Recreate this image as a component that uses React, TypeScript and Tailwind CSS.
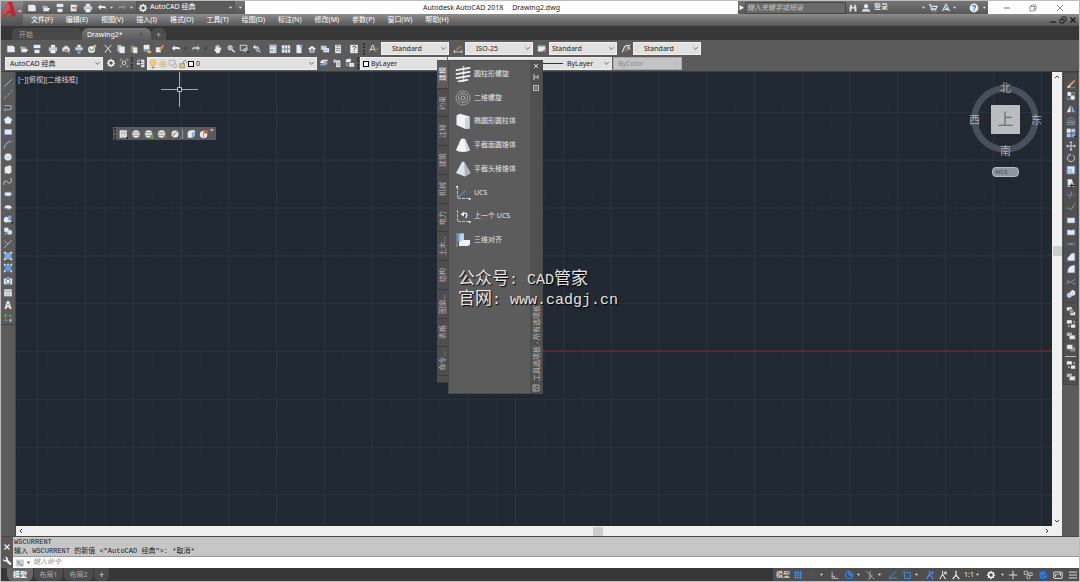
import type { ReactNode } from 'react'
import clsx from 'clsx'

const UI = "font-['Noto_Sans','Noto_Sans_CJK_SC',sans-serif]"
const MONO = "font-['Liberation_Mono','Noto_Sans_CJK_SC',monospace]"

const W = '#e6ebf0'
const B = '#7fa8d6'
const D = '#3a3a3a'

const ICONS: Record<string, ReactNode> = {
  // file
  new: <path d="M1.500 2h7l2 2v6h-9z" fill={W} />,
  open: <><path d="M1.5 3h3l1 1h3v2H4L2.5 9.5z" fill="#aab4bf" /><path d="M4 6h7L9 10H2.5z" fill={W} /></>,
  save: <><path d="M2 1h8v4H2z" fill={W} /><path d="M2 5h8v2H2z" fill="#56779b" /><path d="M3 7h6v4H3z" fill={W} /></>,
  saveas: <><path d="M2 2h7v8H2z" fill={W} /><path d="M3.500 5h4v1.500h-4z" fill="#56779b" /><path d="M5.500 7.500 10 2l1.200 1L7 8.500z" fill="#e0a040" /></>,
  print: <><path d="M3.500 1h5v3.500h-5z" fill={W} /><path d="M1 4h10v4.500H1z" fill="#c6d2df" /><path d="M3 7h6v4H3z" fill="#fff" stroke={B} strokeWidth=".6" /></>,
  preview: <><path d="M1.500 5 6 1.500 10.500 5v4H8.500V6.500h-5V9h-2z" fill="#d5dde5" /><circle cx="6.500" cy="7" r="2.200" fill="none" stroke={W} /><path d="m8 8.500 2.500 2.500" stroke={W} /></>,
  publish: <><path d="M4 1h4v3H4z" fill={W} /><path d="M1.500 4h9v3.500h-9z" fill="#c6d2df" /><path d="M6 6v5M4 9l2 2.500L8 9" stroke={B} strokeWidth="1.300" fill="none" /></>,
  dwf: <><circle cx="5.500" cy="6.500" r="4.200" fill={W} /><path d="M3 5.500c2 3 4 3 5.500 0" stroke="#4f9b4e" fill="none" strokeWidth="1.300" /><path d="M8 1h3v3H8z" fill="#e4b64c" /></>,
  cut: <><path d="m2 1 7 8M10 1 3 9" stroke={W} strokeWidth="1.100" /><path d="M2 9.500h2M8 9.500h2" stroke="#bfc8d0" strokeWidth="1.500" /></>,
  copy: <><path d="M1.500 1h5v8h-5z" fill="#a9b4c0" /><path d="M4 3h6.500v8H4z" fill={W} /></>,
  paste: <><path d="M2 2h5v8H2z" fill="#9b8a72" /><path d="M5 4h5v7H5z" fill={W} /></>,
  match: <><path d="M2 1h7v5H2z" fill={W} /><path d="M2 6h7v3H2z" fill={B} /><path d="M6.500 8H11v3H6.500z" fill="#e4b64c" /></>,
  block: <><path d="M1 4h6v6H1z" fill={W} /><path d="m5 7 4-6 2 1-4 6z" fill="#d8893d" /></>,
  undo: <path d="M1 5 4.500 1.500v2.200h3.700c2 0 2.800 1.300 2.800 4.300-1-1.800-1.600-2-3-2H4.500v2.500z" fill={W} />,
  redo: <path d="M11 5 7.500 1.500v2.200H3.800C1.800 3.700 1 5 1 8c1-1.800 1.600-2 3-2h3.500v2.500z" fill="#bcbcbc" />,
  pan: <path d="M3 6V2.500h1V5l.6-4h1L6 5l.8-3.700h1L7.600 5.500 9 3.800l1.200.7L8.500 9 7.500 11H4.200L1.500 7l.8-1z" fill={W} />,
  zoom: <><circle cx="5" cy="4.500" r="2.600" fill="#9db0c2" stroke={W} /><path d="m7 6.500 3.500 3.500" stroke={W} strokeWidth="1.600" /></>,
  zoomwin: <><path d="M1.500 1.500h8v6h-8z" fill="none" stroke={W} /><circle cx="7.500" cy="7" r="2" fill="#8796a6" stroke={W} strokeWidth=".8" /><path d="M9 9h2.500v2.500z" fill="#111" /></>,
  zoomprev: <><path d="M1 3.500 4 1v2h4v1.500H4v2z" fill={W} /><circle cx="7" cy="7" r="1.800" fill="none" stroke={W} /><path d="m8.500 8.500 2 2" stroke={W} /></>,
  props: <><path d="M2 1h8v10H2z" fill={W} /><path d="M2 1h8v3H2z" fill="#a9c4e2" /><path d="M3 6h3v3H3z" fill={B} /><path d="M7 6.500h2M7 9h2" stroke="#666" strokeWidth=".7" /></>,
  center: <><path d="M1 1.500h10v9H1z" fill={W} /><path d="M4.500 1.500v9M8 1.500v9M1 6h10" stroke="#56779b" /></>,
  palettes: <><path d="M3 1h6v10H3z" fill={W} /><path d="M7 1h3v3H7z" fill={B} /></>,
  sheet: <><path d="M1 6 6 2l5 4-5 2z" fill={W} /><path d="M3 7h6v3.500H3z" fill="#b5c3d1" /><path d="M5 5.500h2V9H5z" fill="#56779b" /></>,
  markup: <><path d="M1 2h7v5H1z" fill="#bccbd9" /><path d="M4 5h7v5H4z" fill={W} /><path d="M5 7.500h5" stroke={B} /></>,
  calc: <><path d="M2.500 1h7v10h-7z" fill={W} /><path d="M3.500 2.500h5M3.500 5.500h5M3.500 8h5" stroke="#777" /></>,
  helpbox: <><path d="M1.500 1h9v10h-9z" fill={W} /><path d="M4.500 4c0-2 3.500-2 3.500 0C8 5.500 6.200 5.300 6.200 7M6.200 8.300v1.200" stroke="#444" fill="none" strokeWidth="1.200" /></>,
  // styles
  textstyle: <><path d="M1 9 4 1.500h1L8 9M2.300 6.500h4.300" stroke={W} fill="none" strokeWidth="1.100" /><path d="m6 10 1-2.500L11 4l.8 1-4 4z" fill="#a8764b" /></>,
  dimstyle: <><path d="M1 9.500h10M1.500 7v4M10.500 7v4" stroke={W} strokeWidth=".9" /><path d="m3 8 1-2.500L9 2l1.300 1.500L6 7z" fill="#a8764b" /></>,
  tablestyle: <><path d="M1 2h9v7H1z" fill={W} /><path d="M1 2h9v1.500H1z" fill="#9aa" /><path d="m6 10 1-2L11 5l.8 1L8 9.500z" fill="#a8764b" /></>,
  mleader: <><path d="M1.500 10 4 4c1-2 3-2.500 7-2.500" stroke={W} fill="none" strokeWidth="1.300" /><path d="M7 3h4v4H7z" fill="#bbb" /><path d="m4 10 1-2.500L9 5l.8 1L6 9.500z" fill="#a8764b" /></>,
  gear: <><circle cx="6" cy="6" r="3" fill="none" stroke="#eee" strokeWidth="1.800" /><path d="M6 1v1.500M6 9.500V11M1 6h1.500M9.500 6H11M2.500 2.500l1 1M8.500 8.500l1 1M9.500 2.500l-1 1M3.500 8.500l-1 1" stroke="#eee" strokeWidth="1.500" /></>,
  wsave: <><path d="M1.500 4V1.500H4M8 1.500h2.500V4M10.500 8v2.500H8M4 10.500H1.500V8" stroke="#aaa" fill="none" /><circle cx="6" cy="6" r="2.200" fill="none" stroke="#bbb" strokeWidth="1.500" /></>,
  layers: <><path d="m1 3 4-2v3L1 6z" fill={B} /><path d="M1 6h4v2H1z" fill={W} /><path d="M6 2h4v9H6z" fill={W} /><path d="M6 5h3M6 8h3" stroke="#666" /></>,
  bulb: <><path d="M6 1a3.200 3.200 0 0 1 1.800 6v1.500H4.200V7A3.200 3.200 0 0 1 6 1z" fill="#f2d25c" stroke="#b59535" strokeWidth=".5" /><path d="M4.500 9.500h3v1.500h-3z" fill="#777" /></>,
  sun: <><circle cx="6" cy="6" r="2.300" fill="#f7e07a" stroke="#a9913c" strokeWidth=".7" /><path d="M6 .8v2M6 9.200v2M.8 6h2M9.200 6h2M2.300 2.300l1.300 1.300M8.400 8.400l1.300 1.300M9.700 2.300 8.400 3.600M3.600 8.400 2.300 9.700" stroke="#a9913c" strokeWidth=".7" /></>,
  vpfreeze: <><path d="M1.500 1.500h7v6h-7z" fill="none" stroke="#aaa" /><circle cx="8" cy="8" r="2.400" fill="#ddd" stroke="#aaa" /></>,
  lock: <><path d="M2 5.500h6v5H2z" fill="#dcc677" stroke="#77704e" strokeWidth=".6" /><path d="M6.500 5.500V3a1.800 1.800 0 0 1 3.500 0v1.500" stroke="#777" fill="none" /></>,
  layercur: <><path d="m1 8 3-2h7L8 9H2z" fill={B} /><path d="m1 5 3-3h7L8 6H2z" fill={W} /><path d="M5 4.500h3.500" stroke="#56779b" /></>,
  layerprev: <><path d="M5 3h5v8H5z" fill={W} /><path d="M1 4 4 1v2h4v1.500H4v2z" fill="#cfd8e0" /><path d="M6 6h3M6 8.500h3" stroke="#56779b" /></>,
  layerstate: <><path d="m1 2 3-1h3v4H1z" fill={W} /><path d="M5 6h6v4.500H5z" fill={W} /><path d="M2 6v3h2M7 8h3" stroke="#bcd" fill="none" /></>,
  // draw
  line: <path d="m1.500 10.500 9-9" stroke="#a9b5c0" strokeWidth="1.200" />,
  xline: <path d="m2 10 8-8M1 11h1.500M9.500 1H11" stroke="#93a7bb" strokeDasharray="4 1" />,
  pline: <><path d="M2 3h5.500a2.500 2.500 0 0 1 0 5H2" stroke="#8fb0d2" fill="none" strokeWidth="1.300" /><path d="M1 6.500h3v3H1z" fill="#7d90a3" /></>,
  polygon: <path d="M6 1.500 10.800 5 9 10.500H3L1.200 5z" fill={W} stroke="#8fa3b8" strokeWidth=".6" />,
  rect: <path d="M2 3h8.500v6H2z" fill={W} stroke={B} strokeWidth=".8" />,
  arc: <path d="M1.500 10.500C2 5 5.500 2 10.500 1.500" stroke={B} fill="none" strokeWidth="1.300" />,
  circle: <><circle cx="6" cy="6" r="4.300" fill={W} stroke="#92adca" strokeWidth=".8" /><circle cx="6" cy="6" r="1" fill={B} /></>,
  cloud: <path d="M3 2a2 2 0 0 1 3 0 2 2 0 0 1 4 1v4a2 2 0 0 1-2 3 2 2 0 0 1-3 0 2 2 0 0 1-3-2V4a2 2 0 0 1 1-2z" fill="#e9e9e9" />,
  spline: <path d="M1 9.500C1 5 3 3.500 5 5.500s3.500 3 5-.5c.8-1.800 0-3-1.500-3.500" stroke="#cfd7df" fill="none" strokeWidth="1.100" />,
  ellipse: <><ellipse cx="6" cy="6" rx="4.500" ry="2.400" fill={W} stroke={B} strokeWidth=".7" /><path d="M1 6h2M9 6h2M6 3v1.500" stroke="#467bb5" /></>,
  earc: <><path d="M1.500 7C2 3 10 3 10.500 7 9 9 7 8 6 8z" fill={W} /><path d="M1 7h2M5.500 8.500h2" stroke={B} strokeWidth="1.400" /></>,
  insert: <><path d="m1 5 3-2 3 2v4L4 10.500 1 9z" fill={W} /><path d="M6 2h4v4H6z" fill={B} /><path d="M6 7h4v3H6z" fill="#c9d5e2" /><path d="M9.500 9.500H12V12z" fill="#111" /></>,
  mkblock: <><path d="M1.500 2h5v5h-5z" fill={W} /><circle cx="8" cy="7.500" r="3" fill="#d5dbe0" /><path d="M2 8h3v2H2z" fill={B} /></>,
  point: <path d="m1.500 2 4 4M10.500 1.500l-9 9" stroke="#a9bdd1" strokeWidth="1.100" />,
  hatch: <><path d="M2 2h8v8H2z" fill="#8db8ea" /><path d="M1 1h2v2H1zM9 1h2v2H9zM1 9h2v2H1zM9 9h2v2H9z" fill={W} /><path d="M2 4.500h8M2 7.500h8" stroke="#5c8fcb" /></>,
  gradient: <><path d="M2 2h8v8H2z" fill="#5e96da" /><path d="M1 1h2v2H1zM9 1h2v2H9zM1 9h2v2H1zM9 9h2v2H9zM5 1h2v1.500H5z" fill={W} /></>,
  region: <><path d="M1 3h10v7H1z" fill={W} /><circle cx="6" cy="6.500" r="2.600" fill="#fff" stroke="#5c8fcb" strokeWidth="1.300" /><path d="M4 1.500h4V3H4z" fill={B} /></>,
  table: <><path d="M1.500 1.500h9V10h-9z" fill={W} /><path d="M1.500 3.500h9M4.500 4v6M7.500 4v6" stroke="#777" strokeWidth=".7" /></>,
  addsel: <><circle cx="3" cy="3" r="2" fill="#53a043" /><path d="M7 3h2v2M3 7v2h2" stroke="#aaa" fill="none" strokeWidth=".8" /><circle cx="9" cy="9" r="1.700" fill="#8fb5e5" /></>,
  // modify
  erase: <><path d="M3 7.500 10 1l1 1.500-6 6.500z" fill="#e0a04c" /><path d="m1 9.500 2.500-2L5.500 9 3 11z" fill="#f0e0d5" /><path d="M5 10.500h6" stroke="#999" /></>,
  mcopy: <><circle cx="4" cy="3.500" r="2.600" fill={W} /><circle cx="8" cy="8" r="2.800" fill={W} stroke={B} strokeWidth=".6" /><path d="M7 2h3v3M2 7v3h3" stroke="#aaa" fill="none" /></>,
  mirror: <><path d="M5.300 1.500V10H1z" fill={W} /><path d="M6.700 1.500V10H11z" fill={B} /></>,
  offset: <><path d="M2 8V6a3.800 3.800 0 0 1 8 0v2z" fill="none" stroke="#7d94ad" /><path d="M1 8h10M1 10.500h10M4.500 8V6.500a1.500 1.500 0 0 1 3 0V8" stroke="#8ba2ba" fill="none" /></>,
  array: <><path d="M1 1h4.500v4.500H1zM6.500 1h4.500v4.500H6.500zM1 6.500h4.500v4.500H1z" fill="#a8caef" /><path d="M1 1h4.500v4.500H1z" fill={W} /><path d="M6.500 6.500h4.500v4.500H6.500z" fill={B} /><path d="M9.500 9.500H12V12z" fill="#111" /></>,
  move: <path d="M6 0 8 2.500H6.600v2.900h2.900V4L12 6 9.500 8V6.600H6.600v2.900H8L6 12 4 9.500h1.400V6.600H2.500V8L0 6l2.500-2v1.400h2.900V2.500H4z" fill="#c3d5e8" />,
  rotate: <><path d="M4 2.500a4.200 4.200 0 1 0 4 0" stroke="#c8d0d8" fill="none" strokeWidth="1.200" /><path d="m3 .5 4 1.300-3 2.500z" fill={B} /></>,
  scale: <><path d="M1.500 1.500h9v9h-9z" fill={W} stroke={B} /><path d="M1.500 5H7v5.500H1.500z" fill="#b5d0ee" stroke="#6b96c7" strokeWidth=".6" /></>,
  stretch: <><path d="M2 1.500h5L10 10.500H2z" fill={W} /><path d="M2 8h4v2.500H2z" fill={B} /><path d="M7 6.500v5M5 9h5" stroke="#111" strokeWidth="1.200" /></>,
  trim: <><path d="M1 6h3M5.500 6H7M8.500 6H10" stroke="#6f95bc" strokeWidth="1.200" /><path d="m4 10 3-8" stroke="#8a9bab" /></>,
  extend: <><path d="M1 7.500h5" stroke="#6f95bc" strokeWidth="1.200" /><path d="m6 10 4.500-8" stroke="#8f9fae" /></>,
  brk: <path d="M1.500 3.500h9v6h-9z" fill={W} stroke={B} strokeWidth=".7" />,
  brk2: <><path d="M1.500 3.500h9v6h-9z" fill={W} stroke={B} strokeWidth=".7" /><path d="M5 2h2v2H5z" fill="#555" /></>,
  join: <path d="M1 6h4M7 6h4M4 4.500 6 6 4 7.500M8 4.500 6 6l2 1.500" stroke="#7598bd" fill="none" />,
  chamfer: <path d="M2 10.500V7l5-5.500h3.500v9z" fill={W} stroke={B} strokeWidth=".6" />,
  fillet: <path d="M2 10.500C2 4 5 1.500 10.500 1.500v9z" fill={W} stroke={B} strokeWidth=".6" />,
  blend: <path d="M1 9C3 3 5 8 6.500 6S9 3 11 3M1 5h3M8 8h3" stroke="#6c8fb5" fill="none" strokeWidth="1.400" />,
  explode: <><path d="m1 6 3-2 3 2v3l-3 2-3-2z" fill="#b6cfe9" /><path d="m5 3 3-2 3 2v4L8 8.500 5 7z" fill={W} /><path d="m5 3 3 1.500V8.500" stroke={B} fill="none" strokeWidth=".6" /></>,
  order1: <><path d="M1 1.500h6v4H1z" fill={W} /><path d="M5 7h6v4H5z" fill={W} /><path d="M4 4h5v4.500H4z" fill="#9a9a9a" stroke="#555" strokeWidth=".5" /></>,
  order2: <><path d="M1 1.500h6v4H1zM6 6.500h5v4H6z" fill={W} /><path d="M3 7v2h2M8.500 3h1.500v2.500" stroke="#ccc" fill="none" /></>,
  order3: <><path d="M1 2h6v4H1z" fill="#bbb" /><path d="M4 5h7v5H4z" fill={W} stroke="#666" strokeWidth=".6" /></>,
  order4: <><path d="M5 5h6v5H5z" fill="#999" /><path d="M1 2h7v5.500H1z" fill={W} stroke="#666" strokeWidth=".6" /></>,
  // solids toolbar
  hide: <><path d="M2 1.500h8.500v9H2z" fill={W} /><path d="M5 1.500v9M8 1.500v9M2 5h8.500" stroke="#888" strokeWidth=".6" /><path d="M9.500 9.500H12V12z" fill="#111" /></>,
  globe: <><circle cx="6" cy="6" r="4.500" fill={W} /><path d="M1.500 4.500h9M1.500 7.500h9" stroke="#777" strokeWidth=".9" /></>,
  globeadd: <><circle cx="5.500" cy="6" r="4.500" fill={W} /><path d="M1 4.500h9M1 7.500h9" stroke="#777" strokeWidth=".9" /><circle cx="9.500" cy="9.500" r="2.400" fill="#5ea03b" /></>,
  globedel: <><circle cx="5.500" cy="6" r="4.500" fill={W} /><path d="M1 4.500h9M1 7.500h9" stroke="#777" strokeWidth=".9" /><path d="M8 9.500h3.500" stroke="#d04a48" strokeWidth="2.200" /></>,
  globeno: <><circle cx="6" cy="6" r="4.300" fill={W} /><path d="m2 10 8-8M3 7l3-3" stroke="#777" /></>,
  cube: <><path d="m2 3.500 3-2h5.500v7l-3 2H2z" fill={W} /><path d="M7 4h3.500v4L7 10.500z" fill="#86b4e8" /></>,
  clip: <><circle cx="5.500" cy="6.500" r="4.500" fill={W} /><path d="M5.500 2.500v8" stroke="#888" /><path d="M6.500 1H11v4.500H6.500z" fill="#dc4b39" /></>,
  // info center
  find: <path d="M1.500 10.500V5L3 1.500h2v3h2v-3h2L10.500 5v5.500H7.500V7h-3v3.500z" fill="#e0e0e0" stroke="#444" strokeWidth=".4" />,
  user: <><circle cx="6" cy="3.800" r="2.500" fill="#e3eaf0" /><path d="M1 10.500c0-3 2-3.500 5-3.500s5 .5 5 3.500z" fill="#c6d8e6" /></>,
  cart: <path d="M1 2h2l1 6h6M4 4h7l-1.500 3H4.500M5 10h.8M9 10h.8" stroke="#d5dfeb" fill="none" strokeWidth="1.400" />,
  a360: <path d="M1.500 10 6 1.500 10.500 10M3 8l6-1.500M4.500 5l4 4" stroke="#c9ddf4" fill="none" strokeWidth="1.300" />,
  help: <><circle cx="6" cy="6" r="5.300" fill="#e9f0f7" /><path d="M4.300 4.600c.2-2.200 3.600-2 3.500 0C7.700 6 6.100 5.800 6.100 7.400M6.100 8.400v1.300" stroke="#2c68ac" fill="none" strokeWidth="1.300" /></>,
  // status bar
  grid: <path d="M3 1v10M6 1v10M9 1v10M1 3h10M1 6h10M1 9h10" stroke="#3b8dea" strokeWidth="1.100" />,
  snap: <path d="M3 3h1M6 3h1M9 3h1M3 6h1M6 6h1M9 6h1M3 9h1M6 9h1M9 9h1" stroke="#6d6d6d" />,
  ortho: <path d="M2.500 2v8H10M5.500 10V7.500h-3" stroke="#c9c9c9" fill="none" />,
  polar: <><circle cx="6" cy="6" r="4.300" fill="#23549a" stroke="#3b8dea" strokeWidth="1.200" /><path d="M6 2v4h4" stroke="#6fb0f5" fill="none" /></>,
  iso: <path d="m1 1 10 10M6 1v10M4 11l5-5" stroke="#b5b5b5" fill="none" strokeWidth=".9" />,
  otrack: <><path d="M10 1.500 2 9.500h9" stroke="#3b8dea" fill="none" strokeWidth="1.200" /><path d="M1 9h2v2H1z" fill="#3b8dea" /></>,
  osnap: <><path d="M3 3h7v7H3z" fill="none" stroke="#3b8dea" strokeWidth="1.200" /><path d="M1 1h4v4H1z" fill="#2d8a4c" /></>,
  anno: <path d="M5.500 1v4L2 11M5.500 5 10 11M7 3.500h3.500M9 1.500v4" stroke="#3f92f0" fill="none" strokeWidth="1.500" />,
  anno2: <path d="M5.500 1v4L2 11M5.500 5 9 11M7.500 2l3 3M10.500 2l-3 3" stroke="#ddd" fill="none" strokeWidth="1.300" />,
  anno3: <path d="M6 1v5L2 11M6 6l4 5" stroke="#e0e0e0" fill="none" strokeWidth="1.600" />,
  plus: <path d="M6 1v10M1 6h10" stroke="#ddd" strokeWidth="1.200" />,
  isolate: <><path d="M1.500 1.500h4v4h-4zM7 3.500h4v3H7z" fill="none" stroke="#ccc" /><circle cx="6.500" cy="8.500" r="2" fill="none" stroke="#ccc" /></>,
  hw: <><path d="M1 1h10v10H1z" fill="#1f5db0" /><circle cx="6" cy="6" r="4.300" fill="#2f7fe0" /><path d="m3.500 6.500 2 1.500L9 4" stroke="#14407c" fill="none" /></>,
  clean: <><path d="M1 2.500h10v7.500H1z" fill="none" stroke="#ddd" strokeWidth="1.200" /><path d="M3 8V5.500h2.500M6.500 4.500H9V7" stroke="#ddd" fill="none" strokeWidth="1.200" /></>,
  burger: <path d="M1 2.500h10M1 6h10M1 9.500h10" stroke="#ddd" strokeWidth="1.200" />,
  wrench: <path d="M1 3.500 3 5.200 4.700 4.500 5 2.800 3.500 1C6 .5 7.500 2 7 4.500l4 4c1 1.500-.8 3-2 2l-4-4C3 7 1 6 1 3.500z" fill="#eee" />,
}

const PALETTE_ICONS: Record<string, ReactNode> = {
  helix: <><path d="M8.500 0v16" stroke="#c5c5c5" strokeWidth="1.500" /><path d="m1.500 4.200 13-2.400M1.500 8.200l13-2.400M1.500 12.200l13-2.400M3.500 15.500l9-1.700" stroke="#f2f2f2" strokeWidth="1.800" strokeLinecap="round" /></>,
  spiral: <><circle cx="8" cy="8" r="7" fill="none" stroke="#a5a5a5" strokeWidth=".9" /><circle cx="8" cy="8" r="4.500" fill="none" stroke="#b5b5b5" strokeWidth=".9" /><circle cx="8" cy="8" r="2" fill="none" stroke="#bdbdbd" strokeWidth=".9" /></>,
  cylinder: <><path d="M1.500 2.500 5 .8l9.500 2.700v12L10 15.800 1.500 12z" fill="#f1f3f6" /><path d="m10 5 4.500-1.500v12L10 15.800z" fill="#cdd3dc" /></>,
  cone: <><path d="M6 2c1-.8 3-.8 4 0l5 11c-2 2.500-12 2.500-14 0z" fill="#f0f2f5" /><path d="m9.500 2 2 12.500 3.500-1.500L10 2z" fill="#cfd4dc" /></>,
  pyramid: <><path d="m7 1 2-.3L15.500 12 10 15.500 1 12z" fill="#dfe4ea" /><path d="M9 .7 15.500 12 10 15.500z" fill="#aeb5be" /></>,
  ucs: <><path d="M2.500 2v11.500H14" stroke="#bcc4cc" fill="none" strokeDasharray="3 1" /><path d="m2.500 13.500 8-8" stroke="#5f88b8" strokeWidth="1.300" /><path d="M1 1h2v1.500H1zM14 13h1.500v2H14z" fill="#eee" /></>,
  ucsprev: <><path d="M2.500 2v11.500H14" stroke="#bcc4cc" fill="none" strokeDasharray="3 1" /><path d="M7 6c5-2.500 6 1 3.500 4" stroke="#eee" fill="none" strokeWidth="1.300" /><path d="M5.500 6.500 9 3.500v5z" fill="#eee" /><path d="M14 13h1.500v2H14z" fill="#eee" /></>,
  align: <><path d="M2 1v14" stroke="#99a" /><path d="M3 1.500h6V9H3z" fill="#7faade" /><path d="M5 1.500h4V8H5z" fill="#b8d2f0" /><path d="M4 9.500 7 8h8v4.500L13 14H4z" fill="#eef2f7" /></>,
}

function Icon({ name, className }: { name: string; className?: string }) {
  return <svg viewBox="0 0 12 12" className={clsx('size-[10px] shrink-0', className)} aria-hidden="true">{ICONS[name]}</svg>
}

function Tool({ name, className }: { name: string; className?: string }) {
  return (
    <button aria-label={name} className={clsx('flex w-[13px] h-3 shrink-0 items-center justify-center', className)}>
      <Icon name={name} />
    </button>
  )
}

function Caret({ dark }: { dark?: boolean }) {
  return (
    <svg viewBox="0 0 6 6" className="w-[5px] h-[5px] shrink-0" aria-hidden="true">
      <path d="M1 2h4L3 4.500z" fill={dark ? D : '#e0e0e0'} />
    </svg>
  )
}

function Grip() {
  return <span className="w-[2px] h-3 shrink-0 border-l-2 border-dotted border-[#333]" />
}

interface ComboProps { label: string; value: string; className?: string; pad?: string; disabled?: boolean; children?: ReactNode }

function Combo({ label, value, className, pad = 'pl-1', disabled, children }: ComboProps) {
  return (
    <div className={clsx('flex h-[13px] shrink-0 items-center border text-[7px]', disabled ? 'bg-[#c4c4c4] border-[#aaa] text-[#888]' : 'bg-[#e1e1e1] border-[#f0f0f0] text-[#222]', className)}>
      {children}
      <select aria-label={label} disabled={disabled} className={clsx('min-w-0 flex-1 appearance-none bg-transparent leading-[11px] outline-none', pad)}>
        <option>{value}</option>
      </select>
      <svg viewBox="0 0 6 6" className="w-[5px] h-[5px] mr-[2px] shrink-0" aria-hidden="true">
        <path d="m.5 1.500 2.500 2.500 2.500-2.500" fill="none" stroke={disabled ? '#aaa' : '#555'} />
      </svg>
    </div>
  )
}

const MENUS = ['文件(F)', '编辑(E)', '视图(V)', '插入(I)', '格式(O)', '工具(T)', '绘图(D)', '标注(N)', '修改(M)', '参数(P)', '窗口(W)', '帮助(H)']
const DRAW = ['line', 'xline', 'pline', 'polygon', 'rect', 'arc', 'circle', 'cloud', 'spline', 'ellipse', 'earc', 'insert', 'mkblock', 'point', 'hatch', 'gradient', 'region', 'table']
const MODIFY = ['erase', 'mcopy', 'mirror', 'offset', 'array', 'move', 'rotate', 'scale', 'stretch', 'trim', 'extend', 'brk', 'brk2', 'join', 'chamfer', 'fillet', 'blend', 'explode']
const GROUPS = [
  ['new', 'open', 'save'],
  ['print', 'preview', 'publish', 'dwf'],
  ['cut', 'copy', 'paste', 'match', 'block'],
]
const STYLES = [
  { icon: 'textstyle', label: '文字样式', value: 'Standard', pad: 'pl-[10px]' },
  { icon: 'dimstyle', label: '标注样式', value: 'ISO-25', pad: 'pl-[10px]' },
  { icon: 'tablestyle', label: '表格样式', value: 'Standard', pad: 'pl-[2px]' },
  { icon: 'mleader', label: '多重引线样式', value: 'Standard', pad: 'pl-[10px]' },
]
const PALETTE_TABS = ['建模', '约束', '注释', '建筑', '机械', '电力', '土木...', '结构', '图案...', '表格', '命令...']
const PALETTE_TOOLS = [
  ['helix', '圆柱形螺旋'], ['spiral', '二维螺旋'], ['cylinder', '椭圆形圆柱体'], ['cone', '平截面圆锥体'],
  ['pyramid', '平截头棱锥体'], ['ucs', 'UCS'], ['ucsprev', '上一个 UCS'], ['align', '三维对齐'],
]

function TitleBar() {
  return (
    <div className="flex h-[13px] items-center bg-gradient-to-b from-[#757575] to-[#585858]">
      <div className="flex w-[113px] shrink-0 items-center gap-px pl-[2px]">
        <Tool name="new" /><Tool name="open" /><Tool name="save" /><Tool name="saveas" /><Tool name="print" />
        <Tool name="undo" /><Caret /><Tool name="redo" className="opacity-40" /><Caret />
      </div>
      <button className="flex h-[13px] w-[99px] shrink-0 items-center gap-[2px] border border-[#555] bg-[#5b5b5b] px-px text-[7px] text-white">
        <Icon name="gear" />
        <span className="flex-1 text-left">AutoCAD 经典</span>
        <Caret />
      </button>
      <button aria-label="自定义" className="flex w-[10px] shrink-0 justify-center"><Caret /></button>
      <h1 className="h-[13px] flex-1 whitespace-pre bg-white text-center text-[7px] leading-[13px] text-[#222]">Autodesk AutoCAD 2018     Drawing2.dwg</h1>
      <span className="w-[7px] shrink-0 text-center text-[5px] text-white">▶</span>
      <input aria-label="搜索" placeholder="键入关键字或短语" className="h-3 w-[101px] shrink-0 border border-[#444] bg-[#6a6a6a] px-px text-[7px] italic placeholder:text-[#c4c4c4]" />
      <div className="flex w-[142px] shrink-0 items-center text-[7px] text-white">
        <Tool name="find" /><Tool name="user" className="mr-[2px]" />
        <a href="#login" className="w-[47px]">登录</a>
        <Caret /><Tool name="cart" /><Tool name="a360" /><Caret />
        <Tool name="help" className="ml-[10px]" /><span className="ml-[2px] flex"><Caret /></span>
      </div>
      <div className="flex h-[13px] w-[91px] shrink-0 items-center justify-around bg-white px-[6px]">
        <button aria-label="最小化"><svg viewBox="0 0 8 8" className="size-2"><path d="M1 4h6" stroke="#777" /></svg></button>
        <button aria-label="还原"><svg viewBox="0 0 8 8" className="size-2"><path d="M1 2.500h4.500V7H1zM2.500 2.500V1H7v4.500H5.500" stroke="#777" fill="none" strokeWidth=".8" /></svg></button>
        <button aria-label="关闭"><svg viewBox="0 0 8 8" className="size-2"><path d="m1 1 6 6M7 1 1 7" stroke="#777" strokeWidth=".8" /></svg></button>
      </div>
    </div>
  )
}

function Header() {
  return (
    <header className="flex">
      <button aria-label="应用程序菜单" className="flex h-[25px] w-[22px] shrink-0 items-center bg-gradient-to-b from-[#8a8a8a] to-[#505050]">
        <svg viewBox="0 0 22 25" className="w-[22px] h-[25px]" aria-hidden="true">
          <path d="M1 15.500 6.500 1H11l4 14-4 .5-1.500-4L5 13l-1 2.500z" fill="#c8202c" />
          <path d="m6.500 1 3 4.500L5 12l-4 3.500z" fill="#e8494d" />
          <path d="m8.300 5 1.500 4.500-3.300.8z" fill="#6e6e6e" />
          <path d="M17 9.500h3.500l-1.700 2z" fill="#eee" />
        </svg>
      </button>
      <div className="min-w-0 flex-1">
        <TitleBar />
        <nav className="flex h-3 items-center bg-gradient-to-b from-[#8e8e8e] to-[#565656] pl-2 text-[7px] leading-3 text-white">
          <div className="flex flex-1 gap-[13px]">
            {MENUS.map(m => <button key={m} className="whitespace-nowrap">{m}</button>)}
          </div>
          <div className="flex gap-[2px] pr-[2px]">
            <button aria-label="最小化图形"><svg viewBox="0 0 8 8" className="size-2"><path d="M1 6h6" stroke="#222" strokeWidth="1.300" /></svg></button>
            <button aria-label="还原图形"><svg viewBox="0 0 8 8" className="size-2"><path d="M1 3.500h4V7H1zM3 3V1h4v4H5.500" stroke="#222" fill="none" /></svg></button>
            <button aria-label="关闭图形"><svg viewBox="0 0 8 8" className="size-2"><path d="m1.500 1.500 5 5M6.500 1.500l-5 5" stroke="#222" strokeWidth="1.500" /></svg></button>
          </div>
        </nav>
      </div>
    </header>
  )
}

function FileTabs() {
  return (
    <div className="flex h-[14px] items-end bg-[#373737] pl-[11px] text-[7px] leading-[11px]">
      <button className="h-3 w-[70px] rounded-t-md bg-[#484848] pl-[7px] text-left text-[#aaa]">开始</button>
      <div className="flex h-3 w-[69px] items-center justify-between rounded-t-md bg-gradient-to-b from-[#777] to-[#5c5c5c] pl-[5px] pr-2 text-white">
        <button>Drawing2*</button>
        <button aria-label="关闭" className="text-[#3c3c3c]">×</button>
      </div>
      <button aria-label="新图形" className="h-3 w-[15px] rounded-t-md bg-[#4d4d4d] text-center text-[9px] text-[#bbb]">+</button>
    </div>
  )
}

function Toolbars() {
  return (
    <div className="bg-[#5b5b5b]">
      <div className="flex h-[17px] items-center gap-[3px] pl-[3px]">
        {GROUPS.map(g => <div key={g[0]} className="flex">{g.map(n => <Tool key={n} name={n} />)}</div>)}
        <div className="flex items-center gap-px">
          <Tool name="undo" /><Caret dark /><Tool name="redo" /><Caret dark />
        </div>
        <div className="flex"><Tool name="pan" /><Tool name="zoom" /><Tool name="zoomwin" /><Tool name="zoomprev" /></div>
        <div className="flex">
          <Tool name="props" /><Tool name="center" /><Tool name="palettes" /><Tool name="sheet" /><Tool name="markup" /><Tool name="calc" />
        </div>
        <Tool name="helpbox" />
        <div className="flex items-center gap-[2px]">
          <Grip />
          {STYLES.map(s => (
            <div key={s.icon} className="flex items-center gap-px">
              <Tool name={s.icon} />
              <Combo label={s.label} value={s.value} pad={s.pad} className="w-[68px]" />
            </div>
          ))}
        </div>
      </div>
      <div className="flex h-[14px] items-start gap-px pl-1">
        <Combo label="工作空间" value="AutoCAD 经典" className="w-[98px]" />
        <div className="flex"><Tool name="gear" /><Tool name="wsave" /></div>
        <Grip />
        <div className="flex">
          <Tool name="layers" />
          <Combo label="图层" value="0" className="w-[170px]" pad="pl-[2px]">
            <span className="flex items-center">
              <Icon name="bulb" /><Icon name="sun" /><Icon name="vpfreeze" /><Icon name="lock" />
              <span className="size-[6px] border border-black bg-white" />
            </span>
          </Combo>
          <Tool name="layercur" /><Tool name="layerprev" /><Tool name="layerstate" />
        </div>
        <Grip />
        <Combo label="颜色" value="ByLayer" className="w-[87px]" pad="pl-[2px]">
          <span className="ml-[2px] size-[6px] border border-black bg-white" />
        </Combo>
        <Combo label="线型" value="ByLayer" className="w-[164px]">
          <span className="ml-16 h-px w-[50px] bg-[#333]" />
        </Combo>
        <Combo label="打印样式" value="ByColor" className="w-[69px]" disabled />
      </div>
    </div>
  )
}

function ViewCube() {
  return (
    <div className="absolute right-[10px] top-[10px] flex w-[73px] flex-col items-center text-[11px] leading-3 text-[#a9afb5]">
      <svg viewBox="0 0 68 68" className="absolute left-[2px] top-[3px] size-[68px]" aria-hidden="true">
        <circle cx="34" cy="34" r="30.500" fill="none" stroke="#48505b" strokeWidth="6.500" />
      </svg>
      <span className="relative">北</span>
      <div className="relative flex w-full items-center justify-between py-[11px]">
        <span>西</span>
        <button className="size-[29px] bg-[#b9bdc0] text-[16px] leading-[29px] text-[#6a727a]">上</button>
        <span>东</span>
      </div>
      <span className="relative">南</span>
      <button className="relative mt-[10px] h-[10px] w-[27px] rounded-sm border border-[#b5bac4] bg-[#8f96a3] pl-[2px] text-left text-[6px] leading-[8px] text-[#454c57]">WCS</button>
    </div>
  )
}

function Canvas() {
  return (
    <main className="relative min-w-0 flex-1 overflow-hidden bg-[#202831]">
      <svg className="absolute inset-0 size-full" aria-hidden="true">
        <defs>
          <pattern id="minor" x="2.200" y="1.500" width="9.560" height="9.560" patternUnits="userSpaceOnUse">
            <path d="M.5 0v10M0 .5h10" stroke="#222a34" fill="none" />
          </pattern>
          <pattern id="major" x="21" y="40" width="47.800" height="47.800" patternUnits="userSpaceOnUse">
            <path d="M.5 0v48M0 .5h48" stroke="#29333e" fill="none" />
          </pattern>
        </defs>
        <rect width="100%" height="100%" fill="url(#minor)" />
        <rect width="100%" height="100%" fill="url(#major)" />
        <path d="M500 279H1100" stroke="#6f262c" strokeWidth="1.500" />
        <path d="M145 17.500h37M163.500 0v35" stroke="#a3a9af" />
        <path d="M161.500 15.500h4v4h-4z" fill="#202831" stroke="#c5c9cd" />
      </svg>
      <button className="absolute left-[2px] top-[2px] text-[7px] leading-3 text-[#d5d8db]">[−][俯视][二维线框]</button>
      <div className="absolute left-[97px] top-[55px] flex h-[13px] w-[103px] items-center bg-[#5b5b5b] pl-px">
        <Grip />
        <Tool name="hide" /><Tool name="globe" /><Tool name="globeadd" /><Tool name="globedel" /><Tool name="globeno" />
        <span className="mx-px h-[10px] w-px bg-[#999]" />
        <Tool name="cube" /><Tool name="clip" />
        <button aria-label="关闭" className="self-start text-[6px] leading-[6px] text-white">×</button>
      </div>
      <ViewCube />
    </main>
  )
}

function ToolPalette() {
  return (
    <aside className="absolute left-[436px] top-[59px] flex items-start text-[7px] text-[#e5e5e5]">
      <div className="flex h-[323px] w-[11px] flex-col bg-[#4e4e4e] text-[#b5b5b5]">
        {PALETTE_TABS.map((t, i) => (
          <button key={t} className={clsx('flex min-h-0 flex-1 items-center justify-center border-b border-[#3b3b3b]', i === 0 && 'bg-[#5c5c5c] text-white')}>
            <span className="rotate-180 whitespace-nowrap leading-[9px] [writing-mode:vertical-rl] [text-orientation:sideways]">{t}</span>
          </button>
        ))}
        <span className="h-[7px] border-b border-[#3b3b3b]" />
      </div>
      <div className="flex h-[334px] w-[95px] border border-[#4a4a4a] bg-[#5c5c5c]">
        <ul className="flex h-[187px] flex-1 flex-col justify-between pl-[6px] pt-[5px]">
          {PALETTE_TOOLS.map(([icon, label]) => (
            <li key={label}>
              <button className="flex items-center gap-[3px] whitespace-nowrap leading-4">
                <svg viewBox="0 0 16 16" className="size-4" aria-hidden="true">{PALETTE_ICONS[icon]}</svg>
                {label}
              </button>
            </li>
          ))}
        </ul>
        <div className="flex w-3 flex-col items-center gap-[3px] bg-[#505050] py-px text-[#c0c0c0]">
          <button aria-label="关闭"><svg viewBox="0 0 8 8" className="size-2"><path d="m2 2 4 4M6 2 2 6" stroke="#ddd" /></svg></button>
          <button aria-label="自动隐藏"><svg viewBox="0 0 8 8" className="size-2"><path d="M2 1v6M2 4h4M6 2v4" stroke="#ccc" /></svg></button>
          <button aria-label="特性"><svg viewBox="0 0 8 8" className="size-2"><path d="M1.500 1.500h5v5h-5zM3.500 3.500h1v1h-1z" stroke="#ccc" fill="none" /></svg></button>
          <span className="mt-auto rotate-180 whitespace-nowrap leading-[9px] [writing-mode:vertical-rl] [text-orientation:sideways]">工具选项板 - 所有选项板</span>
          <svg viewBox="0 0 8 8" className="size-2" aria-hidden="true"><path d="M1 1h6v6H1zM3 1v6M5 3v2" stroke="#bbb" fill="none" strokeWidth=".8" /></svg>
        </div>
      </div>
    </aside>
  )
}

function CommandLine() {
  return (
    <section className={clsx('flex h-8 border-t border-[#4a4a4a]', MONO)}>
      <div className="flex w-3 shrink-0 flex-col items-center justify-around bg-[#595959] pt-1">
        <button aria-label="关闭"><svg viewBox="0 0 8 8" className="size-2"><path d="m1.500 1.500 5 5M6.500 1.500l-5 5" stroke="#eee" strokeWidth="1.200" /></svg></button>
        <button aria-label="自定义" className="flex"><Icon name="wrench" className="size-2" /></button>
      </div>
      <div className="min-w-0 flex-1">
        <div className="h-5 border-b border-[#999] bg-[#c6c6c6] pl-px pt-px text-[7px] leading-[9px] text-[#222]">
          <p>WSCURRENT</p>
          <p>输入 WSCURRENT 的新值 &lt;"AutoCAD 经典"&gt;: *取消*</p>
        </div>
        <div className="flex h-[11px] items-center gap-[2px] bg-white pl-[3px]">
          <svg viewBox="0 0 8 8" className="size-2" aria-hidden="true"><path d="M0 .5h8v7H0z" fill="#c9d2dc" /><path d="m1.500 2 2 1.500-2 1.500M4 6h2.500" stroke="#456" fill="none" strokeWidth=".8" /></svg>
          <Caret dark />
          <input aria-label="命令" placeholder="键入命令" className="min-w-0 flex-1 text-[7px] leading-[9px] italic outline-none placeholder:text-[#999]" />
        </div>
      </div>
    </section>
  )
}

function StatusBar() {
  return (
    <footer className="flex h-[13px] items-center bg-[#373737] text-[7px] leading-[11px] text-[#aaa]">
      <div className="flex h-full flex-1 gap-px pl-[6px]">
        <button className="w-[26px] rounded-b-md bg-[#666] font-bold text-white">模型</button>
        <button className="w-[29px] rounded-b-md bg-[#4c4c4c]">布局1</button>
        <button className="w-[29px] rounded-b-md bg-[#4c4c4c]">布局2</button>
        <button aria-label="新建布局" className="w-[15px] rounded-b-md bg-[#4c4c4c] text-[9px] text-[#ddd]">+</button>
      </div>
      <div className="flex h-full items-center bg-[#4e4e4e] pl-[2px] text-[#eee]">
        <button className="w-4">模型</button>
        <Tool name="grid" /><Tool name="snap" /><span className="mx-[2px] flex"><Caret /></span>
        <span className="ml-[2px] flex items-center gap-px"><Tool name="ortho" /><Tool name="polar" /><Caret /></span>
        <span className="ml-[2px] flex items-center gap-px"><Tool name="iso" /><Caret /></span>
        <span className="ml-1 flex items-center gap-px"><Tool name="otrack" /><Tool name="osnap" /><Caret /></span>
        <span className="ml-1 flex items-center"><Tool name="anno" /><Tool name="anno2" /><Tool name="anno3" /></span>
        <button className="flex items-center gap-px pl-[2px]">1:1<Caret /></button>
        <span className="ml-1 flex items-center gap-[3px]"><Tool name="gear" /><Caret /></span>
        <span className="ml-px flex items-center gap-[2px]"><Tool name="plus" /><Tool name="isolate" /><Tool name="hw" /><Tool name="clean" /><Tool name="burger" /></span>
      </div>
    </footer>
  )
}

export default function App() {
  return (
    <div className={clsx('relative flex min-h-screen flex-col overflow-hidden border-x border-y border-[#bdbdbd] bg-[#5b5b5b]', UI)}>
      <Header />
      <FileTabs />
      <Toolbars />
      <div className="flex flex-1 border-t border-[#3f3f3f]">
        <div className="w-[15px] shrink-0 border-r border-[#444]">
          <div className="flex h-[253px] flex-col items-center justify-between border-b border-[#444] pt-[5px]">
            {DRAW.map(n => <Tool key={n} name={n} />)}
            <button aria-label="多行文字" className="h-3 text-[10px] font-bold leading-3 text-[#eee]">A</button>
            <Tool name="addsel" />
          </div>
        </div>
        <div className="flex min-w-0 flex-1 flex-col">
          <div className="flex flex-1">
            <Canvas />
            <div className="flex w-[10px] shrink-0 flex-col items-center bg-[#f0f0f0] py-[2px]">
              <svg viewBox="0 0 6 6" className="size-[6px]"><path d="m1 4 2-2 2 2" stroke="#444" fill="none" /></svg>
              <div className="flex flex-1 flex-col justify-center pb-24"><span className="h-[10px] w-[9px] bg-[#cdcdcd]" /></div>
              <svg viewBox="0 0 6 6" className="size-[6px]"><path d="m1 2 2 2 2-2" stroke="#444" fill="none" /></svg>
            </div>
          </div>
          <div className="flex h-[10px] items-center bg-[#f0f0f0] px-[2px]">
            <svg viewBox="0 0 6 6" className="size-[6px]"><path d="M4 1 2 3l2 2" stroke="#444" fill="none" /></svg>
            <div className="flex flex-1 justify-center pl-32"><span className="h-[9px] w-[10px] bg-[#cdcdcd]" /></div>
            <svg viewBox="0 0 6 6" className="mr-[10px] size-[6px]"><path d="m2 1 2 2-2 2" stroke="#444" fill="none" /></svg>
          </div>
        </div>
        <div className="w-[17px] shrink-0 px-px">
          <div className="flex flex-col items-center border border-[#444] bg-[#505050] pb-px">
            <div className="flex h-[227px] flex-col justify-between pt-[5px]">
              {MODIFY.map(n => <Tool key={n} name={n} />)}
            </div>
            <span className="my-[2px] h-px w-[11px] bg-[#3c3c3c]" />
            <Tool name="order1" /><Tool name="order2" className="mt-px" /><Tool name="order3" /><Tool name="order4" />
            <span className="my-[2px] h-px w-[11px] bg-[#bbb]" />
            <Tool name="order2" /><Tool name="order3" />
          </div>
        </div>
      </div>
      <CommandLine />
      <StatusBar />
      <ToolPalette />
      <div className={clsx('pointer-events-none absolute left-[457px] top-[269px] whitespace-pre text-[15px] leading-[19px] text-[#e4e4e4] [text-shadow:1px_1px_1px_#000]', MONO)}>
        <p><span className="text-[17px]">公众号</span>: CAD<span className="text-[17px]">管家</span></p>
        <p><span className="text-[17px]">官网</span>: www.cadgj.cn</p>
      </div>
    </div>
  )
}
